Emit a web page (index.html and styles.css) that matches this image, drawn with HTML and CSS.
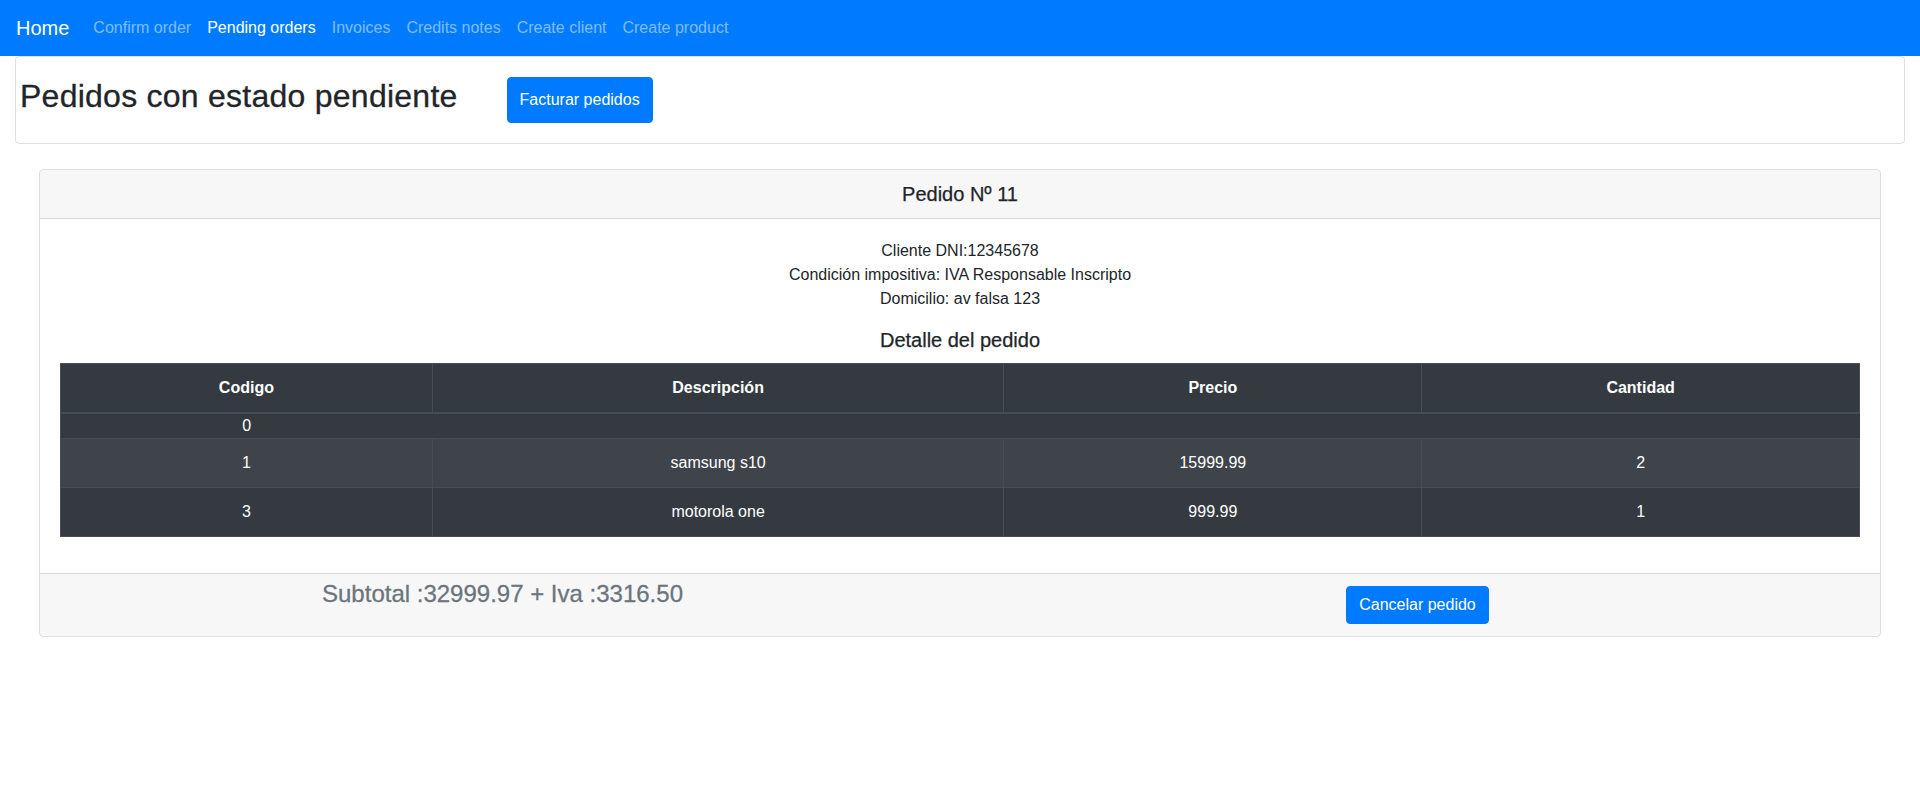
FILE: index.html
```html
<!DOCTYPE html>
<html lang="es">
<head>
<meta charset="utf-8">
<title>Pedidos pendientes</title>
<link rel="stylesheet" href="styles.css">
</head>
<body>
<nav class="navbar">
  <a class="brand" href="#">Home</a>
  <ul class="nav-links">
    <li><a class="nav-link" href="#">Confirm order</a></li>
    <li><a class="nav-link active" href="#">Pending orders</a></li>
    <li><a class="nav-link" href="#">Invoices</a></li>
    <li><a class="nav-link" href="#">Credits notes</a></li>
    <li><a class="nav-link" href="#">Create client</a></li>
    <li><a class="nav-link" href="#">Create product</a></li>
  </ul>
</nav>
<main class="page">
  <section class="title-card">
    <h2 class="page-title">Pedidos con estado pendiente</h2>
    <button class="btn btn-invoice" type="button">Facturar pedidos</button>
  </section>

  <section class="order-card">
    <header class="order-header">
      <h5 class="order-title">Pedido Nº 11</h5>
    </header>
    <div class="order-body">
      <p class="info">Cliente DNI:12345678</p>
      <p class="info">Condición impositiva: IVA Responsable Inscripto</p>
      <p class="info">Domicilio: av falsa 123</p>
      <h5 class="detail-title">Detalle del pedido</h5>
      <table class="items">
        <colgroup>
          <col class="c-code">
          <col class="c-desc">
          <col class="c-price">
          <col class="c-qty">
        </colgroup>
        <thead>
          <tr><th>Codigo</th><th>Descripción</th><th>Precio</th><th>Cantidad</th></tr>
        </thead>
        <tbody>
          <tr class="stray-row"><td class="stray">0</td></tr>
          <tr class="alt"><td>1</td><td>samsung s10</td><td>15999.99</td><td>2</td></tr>
          <tr><td>3</td><td>motorola one</td><td>999.99</td><td>1</td></tr>
        </tbody>
      </table>
    </div>
    <footer class="order-footer">
      <h4 class="subtotal">Subtotal :32999.97 + Iva :3316.50</h4>
      <button class="btn btn-cancel" type="button">Cancelar pedido</button>
    </footer>
  </section>
</main>
</body>
</html>
```
FILE: styles.css
```css
* { box-sizing: border-box; }

body {
  margin: 0;
  font-family: "Liberation Sans", Arial, sans-serif;
  font-size: 16px;
  line-height: 1.5;
  color: #212529;
  background: #fff;
}

/* Navbar */
.navbar {
  display: flex;
  align-items: center;
  height: 56px;
  padding: 8px 16px;
  background: #007bff;
}
.brand {
  font-size: 20px;
  line-height: 30px;
  padding: 5px 0;
  margin-right: 16px;
  color: #fff;
  text-decoration: none;
}
.nav-links {
  display: flex;
  list-style: none;
  margin: 0;
  padding: 0;
}
.nav-link {
  display: block;
  padding: 8px;
  line-height: 24px;
  color: rgba(255, 255, 255, 0.5);
  text-decoration: none;
}
.nav-link.active { color: #fff; }

/* Page */
.page { padding: 0 15px; }

.title-card {
  display: flex;
  align-items: stretch;
  border: 1px solid rgba(0, 0, 0, 0.125);
  border-radius: 4px;
  padding: 20px 20px 20px 4px;
}
.page-title {
  font-size: 32px;
  font-weight: 500;
  line-height: 1.2;
  letter-spacing: 0.25px;
  margin: 0 0 8px;
  -webkit-text-stroke: 0.3px currentColor;
}

.btn {
  font-family: inherit;
  font-size: 16px;
  line-height: 24px;
  color: #fff;
  background: #007bff;
  border: 1px solid #007bff;
  border-radius: 4px;
  padding: 6px 12px;
  cursor: pointer;
}
.btn-invoice { margin-left: 49px; }

/* Order card */
.order-card {
  margin: 25px 24px 0;
  border: 1px solid rgba(0, 0, 0, 0.125);
  border-radius: 4px;
  overflow: hidden;
}
.order-header {
  background: rgba(0, 0, 0, 0.03);
  border-bottom: 1px solid rgba(0, 0, 0, 0.125);
  padding: 12px 20px;
  text-align: center;
}
.order-title {
  margin: 0;
  font-size: 20px;
  font-weight: 500;
  line-height: 24px;
  -webkit-text-stroke: 0.25px currentColor;
}
.order-body {
  padding: 20px;
  text-align: center;
}
.info {
  margin: 0;
  line-height: 24px;
}
.detail-title {
  font-size: 20px;
  font-weight: 500;
  line-height: 24px;
  margin: 17px 0 11px;
  -webkit-text-stroke: 0.25px currentColor;
}

/* Table */
.items {
  width: 100%;
  border-collapse: collapse;
  background: #343a40;
  color: #fff;
  margin-bottom: 16px;
}
.c-code { width: 372px; }
.c-desc { width: 572px; }
.c-price { width: 418px; }
.c-qty { width: 438px; }

.items th,
.items td {
  padding: 12px;
  border: 1px solid #454d55;
  text-align: center;
  vertical-align: top;
  line-height: 24px;
}
.items th {
  font-weight: 700;
  border-bottom: 2px solid #454d55;
}
.items td.stray {
  padding: 0;
  border-right: 0;
}
.items tr.alt { background: #3e4449; }

/* Footer */
.order-footer {
  display: grid;
  grid-template-columns: 1fr 1fr;
  column-gap: 30px;
  align-items: start;
  background: rgba(0, 0, 0, 0.03);
  border-top: 1px solid rgba(0, 0, 0, 0.125);
  padding: 12px 20px;
  text-align: center;
}
.subtotal {
  font-size: 24px;
  font-weight: 500;
  line-height: 1.2;
  color: #6c757d;
  margin: -6px 0 8px;
  -webkit-text-stroke: 0.3px currentColor;
}
.btn-cancel { justify-self: center; }
```
